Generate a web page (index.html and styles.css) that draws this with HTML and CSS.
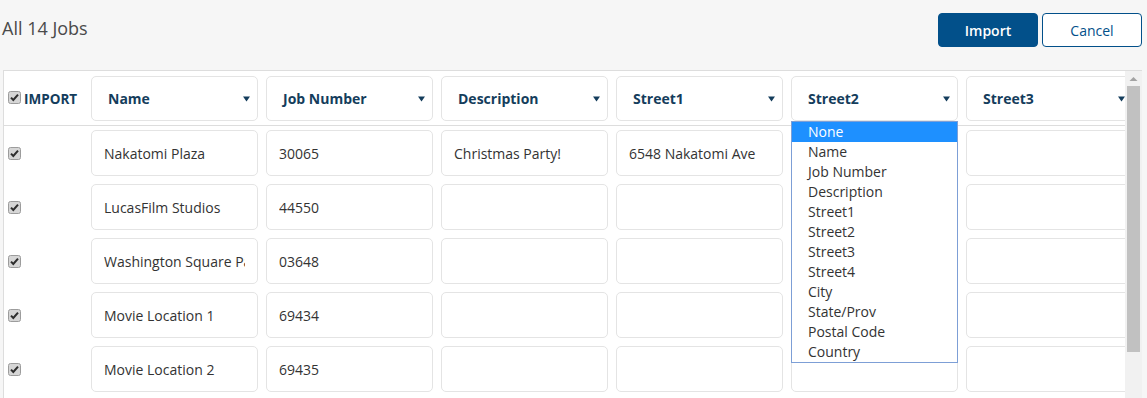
FILE: index.html
```html
<!DOCTYPE html>
<html>
<head>
<meta charset="utf-8">
<link rel="stylesheet" href="styles.css">
</head>
<body>
<div class="topbar">
  <div class="title">All 14 Jobs</div>
  <div class="actions">
    <button class="btn btn-primary">Import</button>
    <button class="btn btn-default">Cancel</button>
  </div>
</div>
<div class="panel">
  <div class="viewport">
    <div class="grid head">
      <div class="check-col"><span class="cb"><svg width="13" height="13" viewBox="0 0 13 13"><rect x="0.5" y="0.5" width="12" height="12" rx="2" fill="#d6d6d6" stroke="#9c9c9c"/><path d="M3 6.6 L5.3 9 L10 3.6" fill="none" stroke="#2e2e2e" stroke-width="2"/></svg></span><span class="import-label">IMPORT</span></div>
      <div class="select"><span>Name</span><svg class="caret" width="7" height="6" viewBox="0 0 7 6"><path d="M0 0.5 H7 L3.5 5.5 Z" fill="#143d5c"/></svg></div>
      <div class="select"><span>Job Number</span><svg class="caret" width="7" height="6" viewBox="0 0 7 6"><path d="M0 0.5 H7 L3.5 5.5 Z" fill="#143d5c"/></svg></div>
      <div class="select"><span>Description</span><svg class="caret" width="7" height="6" viewBox="0 0 7 6"><path d="M0 0.5 H7 L3.5 5.5 Z" fill="#143d5c"/></svg></div>
      <div class="select"><span>Street1</span><svg class="caret" width="7" height="6" viewBox="0 0 7 6"><path d="M0 0.5 H7 L3.5 5.5 Z" fill="#143d5c"/></svg></div>
      <div class="select open"><span>Street2</span><svg class="caret" width="7" height="6" viewBox="0 0 7 6"><path d="M0 0.5 H7 L3.5 5.5 Z" fill="#143d5c"/></svg>
        <ul class="menu">
          <li class="active">None</li>
          <li>Name</li>
          <li>Job Number</li>
          <li>Description</li>
          <li>Street1</li>
          <li>Street2</li>
          <li>Street3</li>
          <li>Street4</li>
          <li>City</li>
          <li>State/Prov</li>
          <li>Postal Code</li>
          <li>Country</li>
        </ul>
      </div>
      <div class="select"><span>Street3</span><svg class="caret" width="7" height="6" viewBox="0 0 7 6"><path d="M0 0.5 H7 L3.5 5.5 Z" fill="#143d5c"/></svg></div>
    </div>
    <div class="body">
      <div class="grid row">
        <div class="check-col"><span class="cb"><svg width="13" height="13" viewBox="0 0 13 13"><rect x="0.5" y="0.5" width="12" height="12" rx="2" fill="#d6d6d6" stroke="#9c9c9c"/><path d="M3 6.6 L5.3 9 L10 3.6" fill="none" stroke="#2e2e2e" stroke-width="2"/></svg></span></div>
        <input class="field" readonly value="Nakatomi Plaza">
        <input class="field" readonly value="30065">
        <input class="field" readonly value="Christmas Party!">
        <input class="field" readonly value="6548 Nakatomi Ave">
        <input class="field" readonly value="">
        <input class="field" readonly value="">
      </div>
      <div class="grid row">
        <div class="check-col"><span class="cb"><svg width="13" height="13" viewBox="0 0 13 13"><rect x="0.5" y="0.5" width="12" height="12" rx="2" fill="#d6d6d6" stroke="#9c9c9c"/><path d="M3 6.6 L5.3 9 L10 3.6" fill="none" stroke="#2e2e2e" stroke-width="2"/></svg></span></div>
        <input class="field" readonly value="LucasFilm Studios">
        <input class="field" readonly value="44550">
        <input class="field" readonly value="">
        <input class="field" readonly value="">
        <input class="field" readonly value="">
        <input class="field" readonly value="">
      </div>
      <div class="grid row">
        <div class="check-col"><span class="cb"><svg width="13" height="13" viewBox="0 0 13 13"><rect x="0.5" y="0.5" width="12" height="12" rx="2" fill="#d6d6d6" stroke="#9c9c9c"/><path d="M3 6.6 L5.3 9 L10 3.6" fill="none" stroke="#2e2e2e" stroke-width="2"/></svg></span></div>
        <input class="field" readonly value="Washington Square Park">
        <input class="field" readonly value="03648">
        <input class="field" readonly value="">
        <input class="field" readonly value="">
        <input class="field" readonly value="">
        <input class="field" readonly value="">
      </div>
      <div class="grid row">
        <div class="check-col"><span class="cb"><svg width="13" height="13" viewBox="0 0 13 13"><rect x="0.5" y="0.5" width="12" height="12" rx="2" fill="#d6d6d6" stroke="#9c9c9c"/><path d="M3 6.6 L5.3 9 L10 3.6" fill="none" stroke="#2e2e2e" stroke-width="2"/></svg></span></div>
        <input class="field" readonly value="Movie Location 1">
        <input class="field" readonly value="69434">
        <input class="field" readonly value="">
        <input class="field" readonly value="">
        <input class="field" readonly value="">
        <input class="field" readonly value="">
      </div>
      <div class="grid row">
        <div class="check-col"><span class="cb"><svg width="13" height="13" viewBox="0 0 13 13"><rect x="0.5" y="0.5" width="12" height="12" rx="2" fill="#d6d6d6" stroke="#9c9c9c"/><path d="M3 6.6 L5.3 9 L10 3.6" fill="none" stroke="#2e2e2e" stroke-width="2"/></svg></span></div>
        <input class="field" readonly value="Movie Location 2">
        <input class="field" readonly value="69435">
        <input class="field" readonly value="">
        <input class="field" readonly value="">
        <input class="field" readonly value="">
        <input class="field" readonly value="">
      </div>
      <div class="grid row">
        <div class="check-col"><span class="cb"><svg width="13" height="13" viewBox="0 0 13 13"><rect x="0.5" y="0.5" width="12" height="12" rx="2" fill="#d6d6d6" stroke="#9c9c9c"/><path d="M3 6.6 L5.3 9 L10 3.6" fill="none" stroke="#2e2e2e" stroke-width="2"/></svg></span></div>
        <input class="field" readonly value="Movie Location 3">
        <input class="field" readonly value="69436">
        <input class="field" readonly value="">
        <input class="field" readonly value="">
        <input class="field" readonly value="">
        <input class="field" readonly value="">
      </div>
    </div>
  </div>
  <div class="scrollbar">
    <svg class="sb-arrow" width="17" height="16" viewBox="0 0 17 16"><path d="M4.5 10 L8.5 6 L12.5 10 Z" fill="#a3a3a3"/></svg>
    <div class="sb-thumb"></div>
  </div>
</div>
</body>
</html>
```
FILE: styles.css
```css
html, body {
  margin: 0;
  padding: 0;
}
body {
  background: #f6f6f6;
  font-family: "Open Sans", "Liberation Sans", sans-serif;
  font-size: 14px;
  color: #333;
  width: 1147px;
  height: 398px;
  overflow: hidden;
}
.topbar {
  height: 70px;
  box-sizing: border-box;
  display: flex;
  justify-content: space-between;
  align-items: flex-start;
  padding: 0 5px 0 2px;
}
.title {
  padding-top: 16px;
  font-size: 18px;
  line-height: 24px;
  color: #4a4a4a;
}
.actions {
  margin-top: 13px;
  display: flex;
  gap: 4px;
}
.btn {
  width: 100px;
  height: 34px;
  box-sizing: border-box;
  border-radius: 4px;
  font-family: "Open Sans", "Liberation Sans", sans-serif;
  font-size: 14px;
  padding: 0;
  cursor: pointer;
}
.btn-primary {
  background: #02508a;
  border: 1px solid #02508a;
  color: #fff;
  font-weight: 600;
}
.btn-default {
  background: #fff;
  border: 1px solid #02508a;
  color: #02508a;
  font-weight: 400;
}
.panel {
  margin-left: 3px;
  width: 1139px;
  height: 328px;
  box-sizing: border-box;
  border-top: 1px solid #dddddd;
  border-left: 1px solid #dddddd;
  background: #fff;
  display: flex;
}
.viewport {
  width: 1121px;
  overflow: hidden;
  position: relative;
}
.grid {
  display: grid;
  grid-template-columns: 79px repeat(6, 167px);
  column-gap: 8px;
  align-items: center;
}
.head {
  padding: 5px 0 4px;
  border-bottom: 1px solid #dddddd;
  position: relative;
  z-index: 2;
}
.body {
  padding-top: 4px;
  display: flex;
  flex-direction: column;
  gap: 8px;
}
.check-col {
  display: flex;
  align-items: center;
  height: 100%;
}
.cb {
  display: inline-flex;
  margin: 0 3px 0 4px;
  width: 13px;
  height: 13px;
}
.head .cb {
  margin-top: -2px;
}
.import-label {
  font-weight: 700;
  font-size: 13.5px;
  color: #143d5c;
}
.select {
  position: relative;
  height: 45px;
  box-sizing: border-box;
  border: 1px solid #e4e4e4;
  border-radius: 5px;
  background: #fff;
  display: flex;
  align-items: center;
  justify-content: space-between;
  padding: 0 7px 0 16px;
  font-weight: 700;
  color: #143d5c;
  white-space: nowrap;
}
.caret {
  display: block;
}
.menu {
  position: absolute;
  top: calc(100% + 1px);
  left: -1px;
  width: 167px;
  box-sizing: border-box;
  margin: 0;
  padding: 0;
  list-style: none;
  background: #fff;
  border: 1px solid #7d9fd6;
  font-weight: 400;
  color: #333;
  z-index: 5;
}
.menu li {
  height: 20px;
  line-height: 20px;
  padding-left: 16px;
}
.menu li.active {
  background: #1e90ff;
  color: #fff;
}
.field {
  height: 46px;
  width: 167px;
  box-sizing: border-box;
  border: 1px solid #e4e4e4;
  border-radius: 5px;
  background: #fff;
  padding: 0 12px;
  margin: 0;
  font-family: "Open Sans", "Liberation Sans", sans-serif;
  font-size: 14px;
  color: #333;
  outline: none;
}
.row .check-col {
  height: 46px;
}
.scrollbar {
  width: 17px;
  flex: none;
  background: #f1f1f1;
  position: relative;
}
.sb-arrow {
  display: block;
}
.sb-thumb {
  position: absolute;
  left: 2px;
  top: 15px;
  width: 13px;
  height: 266px;
  background: #c1c1c1;
}
```
